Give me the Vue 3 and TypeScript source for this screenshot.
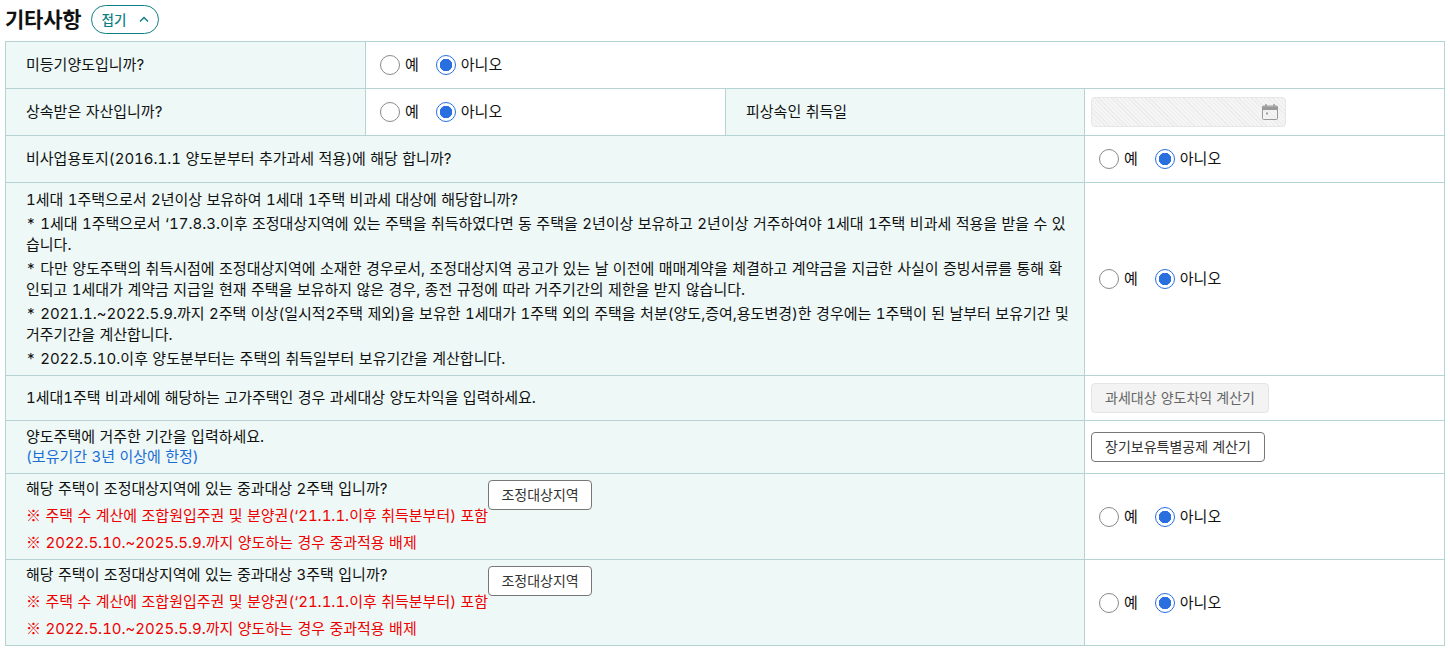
<template>
  <div class="section">
    <div class="section-head">
      <h2>기타사항</h2>
      <button class="toggle" type="button">
        접기
        <svg width="10" height="7" viewBox="0 0 10 7"><path d="M1 5.5 5 1.5 9 5.5" fill="none" stroke="currentColor" stroke-width="1.5" /></svg>
      </button>
    </div>

    <table class="form-table">
      <colgroup>
        <col class="c1" /><col class="c2" /><col class="c3" /><col class="c4" />
      </colgroup>
      <tbody>
        <tr class="r47">
          <th class="pad">미등기양도입니까?</th>
          <td colspan="3" class="radio-cell">
            <div class="radios">
              <label v-for="o in yesNo" :key="o" class="radio"><span class="dot" :class="{ on: o === '아니오' }"></span>{{ o }}</label>
            </div>
          </td>
        </tr>
        <tr class="r47">
          <th class="pad">상속받은 자산입니까?</th>
          <td class="radio-cell">
            <div class="radios">
              <label v-for="o in yesNo" :key="o" class="radio"><span class="dot" :class="{ on: o === '아니오' }"></span>{{ o }}</label>
            </div>
          </td>
          <th class="sub">피상속인 취득일</th>
          <td class="ctl">
            <div class="date">
              <svg width="18" height="18" viewBox="0 0 18 18">
                <rect x="1.5" y="3" width="15" height="13.5" rx="1" fill="none" stroke="#999" stroke-width="1" />
                <path d="M1.5 3.5h15V7h-15z" fill="#999" />
                <path d="M5 1v3M13 1v3" stroke="#999" stroke-width="1.4" />
                <rect x="5" y="9.5" width="2" height="2" fill="#999" />
              </svg>
            </div>
          </td>
        </tr>
        <tr class="r47">
          <th colspan="3">비사업용토지(2016.1.1 양도분부터 추가과세 적용)에 해당 합니까?</th>
          <td class="radio-cell right">
            <div class="radios">
              <label v-for="o in yesNo" :key="o" class="radio"><span class="dot" :class="{ on: o === '아니오' }"></span>{{ o }}</label>
            </div>
          </td>
        </tr>
        <tr>
          <th colspan="3" class="long">
            <p v-for="line in notes" :key="line">{{ line }}</p>
          </th>
          <td class="radio-cell right">
            <div class="radios">
              <label v-for="o in yesNo" :key="o" class="radio"><span class="dot" :class="{ on: o === '아니오' }"></span>{{ o }}</label>
            </div>
          </td>
        </tr>
        <tr class="r45">
          <th colspan="3">1세대1주택 비과세에 해당하는 고가주택인 경우 과세대상 양도차익을 입력하세요.</th>
          <td class="ctl"><button class="btn disabled" type="button">과세대상 양도차익 계산기</button></td>
        </tr>
        <tr class="r53">
          <th colspan="3" class="tight">
            양도주택에 거주한 기간을 입력하세요.<br />
            <span class="blue">(보유기간 3년 이상에 한정)</span>
          </th>
          <td class="ctl"><button class="btn" type="button">장기보유특별공제 계산기</button></td>
        </tr>
        <tr v-for="n in [2, 3]" :key="n" class="r86">
          <th colspan="3" class="heavy">
            <div class="heavy-row">
              <div>
                <p class="q">해당 주택이 조정대상지역에 있는 중과대상 {{ n }}주택 입니까?</p>
                <p class="red first"><span class="mark">※</span> 주택 수 계산에 조합원입주권 및 분양권(‘21.1.1.이후 취득분부터) 포함</p>
                <p class="red"><span class="mark">※</span> 2022.5.10.~2025.5.9.까지 양도하는 경우 중과적용 배제</p>
              </div>
              <button class="btn area" type="button">조정대상지역</button>
            </div>
          </th>
          <td class="radio-cell right">
            <div class="radios">
              <label v-for="o in yesNo" :key="o" class="radio"><span class="dot" :class="{ on: o === '아니오' }"></span>{{ o }}</label>
            </div>
          </td>
        </tr>
      </tbody>
    </table>
  </div>
</template>

<script setup lang="ts">
const yesNo: string[] = ['예', '아니오'];

const notes: string[] = [
  '1세대 1주택으로서 2년이상 보유하여 1세대 1주택 비과세 대상에 해당합니까?',
  '* 1세대 1주택으로서 ‘17.8.3.이후 조정대상지역에 있는 주택을 취득하였다면 동 주택을 2년이상 보유하고 2년이상 거주하여야 1세대 1주택 비과세 적용을 받을 수 있습니다.',
  '* 다만 양도주택의 취득시점에 조정대상지역에 소재한 경우로서, 조정대상지역 공고가 있는 날 이전에 매매계약을 체결하고 계약금을 지급한 사실이 증빙서류를 통해 확인되고 1세대가 계약금 지급일 현재 주택을 보유하지 않은 경우, 종전 규정에 따라 거주기간의 제한을 받지 않습니다.',
  '* 2021.1.~2022.5.9.까지 2주택 이상(일시적2주택 제외)을 보유한 1세대가 1주택 외의 주택을 처분(양도,증여,용도변경)한 경우에는 1주택이 된 날부터 보유기간 및 거주기간을 계산합니다.',
  '* 2022.5.10.이후 양도분부터는 주택의 취득일부터 보유기간을 계산합니다.',
];
</script>

<style>
html, body {
  background: #fff;
}
</style>

<style scoped>
.section {
  padding: 3px 5px 0;
  font-family: Inter, "Noto Sans CJK KR", sans-serif;
  font-size: 15px;
  font-variant-numeric: tabular-nums;
  word-spacing: 0.4px;
  line-height: 20px;
  color: #111;
}

.section-head {
  display: flex;
  align-items: center;
  gap: 10px;
  height: 33px;
  margin-bottom: 5px;
}

h2 {
  margin: 0;
  font-size: 21px;
  font-weight: 600;
  letter-spacing: -0.2px;
}

.toggle {
  display: flex;
  align-items: center;
  justify-content: center;
  gap: 13px;
  width: 68px;
  height: 29px;
  padding: 0;
  border: 1px solid #0f7f85;
  border-radius: 15px;
  background: #fff;
  color: #0f7f85;
  font: inherit;
  font-size: 13.5px;
  font-weight: 500;
}

.form-table {
  width: 1440px;
  table-layout: fixed;
  border-collapse: collapse;
}

.c1, .c2 {
  width: 360px;
}

.c3 {
  width: 359px;
}

th, td {
  border: 1px solid #b5d3d3;
  padding: 0;
}

th {
  padding: 0 14px 0 20px;
  background: #edf8f7;
  font-weight: 400;
  text-align: left;
  vertical-align: middle;
}

td {
  background: #fff;
}

.r47 {
  height: 47px;
}

.r45 {
  height: 45px;
}

.r53 {
  height: 53px;
}

.r86 {
  height: 86px;
}

.long {
  padding-top: 6px;
  padding-bottom: 6px;
  line-height: 21px;
}

.long p {
  margin: 0 0 3px;
  word-break: break-all;
}

.long p:last-child {
  margin-bottom: 0;
}

.tight {
  line-height: 20px;
}

.blue {
  color: #1c6ed4;
}

.radio-cell {
  padding-left: 14px;
}

.radios {
  display: flex;
  gap: 17px;
}

.radio {
  display: flex;
  align-items: center;
  gap: 5px;
}

.dot {
  width: 20px;
  height: 20px;
  box-sizing: border-box;
  border: 1px solid #8a8a8a;
  border-radius: 50%;
  background: #fff;
}

.dot.on {
  border-color: #2a6fe0;
  background: radial-gradient(circle, #2a6fe0 0 6px, #fff 6.5px);
}

.ctl {
  padding-left: 6px;
}

.date {
  display: flex;
  align-items: center;
  justify-content: flex-end;
  box-sizing: border-box;
  width: 195px;
  height: 30px;
  padding-right: 6px;
  border: 1px solid #e6e6e6;
  border-radius: 4px;
  background: repeating-linear-gradient(45deg, #ececec 0 1px, #f5f5f5 1px 3px);
}

.btn {
  height: 30px;
  padding: 0 13px;
  border: 1px solid #777;
  border-radius: 4px;
  background: #fff;
  color: #333;
  font: inherit;
  font-size: 14px;
  word-spacing: inherit;
}

.btn.disabled {
  border-color: #e4e4e4;
  background: #f3f3f3;
  color: #666;
}

.heavy {
  padding: 2px 0 0 20px;
  vertical-align: top;
}

.heavy-row {
  display: flex;
  align-items: flex-start;
}

.heavy p {
  margin: 0;
  white-space: nowrap;
}

.q {
  line-height: 26px;
}

.red {
  color: #ee0000;
  line-height: 28px;
}

.red.first {
  line-height: 25px;
}

.mark {
  font-family: "Noto Sans CJK KR", sans-serif;
}

.area {
  flex: none;
  margin-top: 4px;
  width: 104px;
  padding: 0;
}
</style>
